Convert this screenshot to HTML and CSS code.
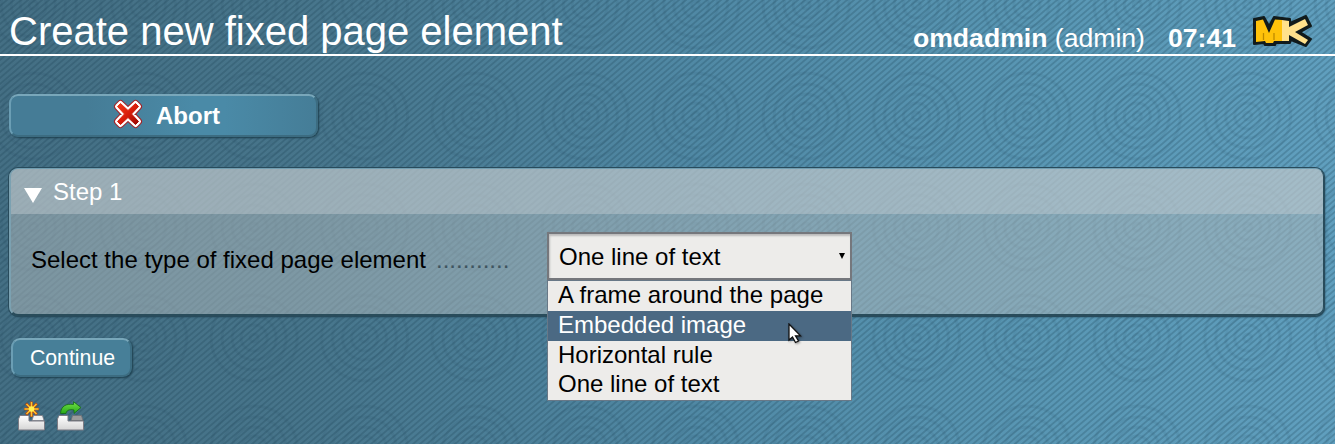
FILE: index.html
```html
<!DOCTYPE html>
<html lang="en">
<head>
<meta charset="utf-8">
<title>Create new fixed page element</title>
<link rel="stylesheet" href="styles.css">
</head>
<body>
<svg class="texture" width="1335" height="444" aria-hidden="true">
  <defs>
    <pattern id="rings" x="309.5" y="60" width="110.4" height="111" patternUnits="userSpaceOnUse">
      <g fill="none" stroke="#183f50" stroke-width="3" stroke-opacity=".085">
        <circle cx="55" cy="56" r="4"/><circle cx="55" cy="56" r="13"/><circle cx="55" cy="56" r="22"/><circle cx="55" cy="56" r="32"/><circle cx="55" cy="56" r="43"/>
      </g>
    </pattern>
    <pattern id="weave" width="7" height="6" patternUnits="userSpaceOnUse">
      <path d="M-3.500 3 3.500-3M-3.500 9 10.500-3M3.500 9 10.500 3" stroke="#12384a" stroke-opacity=".22" stroke-width="1.900"/>
    </pattern>
  </defs>
  <rect width="1335" height="444" fill="url(#weave)"/>
  <rect width="1335" height="444" fill="url(#rings)"/>
</svg>
<header class="header">
  <h1 class="title">Create new fixed page element</h1>
  <div class="session">
    <span class="user"><b>omdadmin</b> (admin)</span>
    <b class="clock">07:41</b>
    <svg class="logo" width="62" height="36" viewBox="0 0 62 36">
      <path d="M2 5 12 3 17 12 22 3 38 5 38 9 54 2 59 12 48 18 59 25 54 32 39 26 38 29 24 29 23 31 13 31 12 29 2 30Z" fill="#111b1c" stroke="#111b1c" stroke-width="2" stroke-linejoin="round"/>
      <path d="M4 7 11 5.500 17 19 23 5.500 30 6 30 27 22 27 21 29 14 29 13 27 4 28Z" fill="#ffc20a"/>
      <path d="M30 6 37 7 37 13 53 5 56 11 43 18 56 26 53 30 37 21 37 27 30 27Z" fill="#ffe18c"/>
      <path d="M11.500 19V26M22 19V26" stroke="#bd8a00" stroke-width="1.300"/>
    </svg>
  </div>
</header>
<main class="content">
  <button class="button abort">
    <svg width="30" height="30" viewBox="0 0 30 30">
      <defs><linearGradient id="red" x2="1" y2="1"><stop stop-color="#f33a18"/><stop offset=".5" stop-color="#d91d0b"/><stop offset="1" stop-color="#980500"/></linearGradient></defs>
      <g stroke-linejoin="round">
        <path d="M7.500 4.500 15 11.500 22.500 4.500 25.500 7.500 18.500 15 25.500 22.500 22.500 25.500 15 18.500 7.500 25.500 4.500 22.500 11.500 15 4.500 7.500Z" fill="none" stroke="#a32125" stroke-width="7"/>
        <path d="M7.500 4.500 15 11.500 22.500 4.500 25.500 7.500 18.500 15 25.500 22.500 22.500 25.500 15 18.500 7.500 25.500 4.500 22.500 11.500 15 4.500 7.500Z" fill="none" stroke="#fff" stroke-width="5"/>
        <path d="M7.500 4.500 15 11.500 22.500 4.500 25.500 7.500 18.500 15 25.500 22.500 22.500 25.500 15 18.500 7.500 25.500 4.500 22.500 11.500 15 4.500 7.500Z" fill="url(#red)" stroke="url(#red)" stroke-width="1"/>
      </g>
    </svg>
    <span>Abort</span>
  </button>
  <section class="panel">
    <h2 class="panel-title"><svg width="18" height="15" viewBox="0 0 18 15"><path d="M0 0H18L9 15Z" fill="#fff"/></svg>Step 1</h2>
    <div class="field">
      <span class="label">Select the type of fixed page element</span><span class="dots">...........</span>
      <div class="select">
        <span>One line of text</span>
        <svg width="6" height="6" viewBox="0 0 6 6"><path d="M0 0H6L3 6Z"/></svg>
        <ul class="menu">
          <li>A frame around the page</li>
          <li class="active">Embedded image</li>
          <li>Horizontal rule</li>
          <li>One line of text</li>
        </ul>
      </div>
    </div>
  </section>
  <button class="button continue">Continue</button>
  <div class="actions">
    <svg width="28" height="30" viewBox="0 0 28 30">
      <defs><linearGradient id="block" x2="0" y2="1"><stop stop-color="#fff"/><stop offset="1" stop-color="#d5d5d5"/></linearGradient></defs>
      <path d="M.5 18 2 14.500H11V20H26.500V29H.5Z" fill="url(#block)" stroke="#7b7b84"/>
      <path d="M14 19.500 15.500 14.500H24.500L26 19.500Z" fill="#f2f2f2" stroke="#7b7b84" stroke-width=".8"/>
      <path d="M13.500 .5V16M6 8H21M8 2.500 19 13.500M19 2.500 8 13.500" stroke="#b8450f" stroke-width="2.600"/>
      <path d="M13.500 1V15.500M6.500 8H20.500M8.500 3 18.500 13M18.500 3 8.500 13" stroke="#ffc62e" stroke-width="1.500"/>
      <circle cx="13.500" cy="8" r="2.800" fill="#fff251"/>
    </svg>
    <svg width="28" height="30" viewBox="0 0 28 30">
      <defs><linearGradient id="green" x2="0" y2="1"><stop stop-color="#75e34b"/><stop offset="1" stop-color="#26a916"/></linearGradient></defs>
      <path d="M.5 18 2 14.500H11V20H26.500V29H.5Z" fill="url(#block)" stroke="#7b7b84"/>
      <path d="M14 19.500 15.500 14.500H24.500L26 19.500Z" fill="#9b9b9b" stroke="#6f6f74" stroke-width=".8"/>
      <path d="M3.500 12.500C4 5 9 2.500 16.500 3.500V.7L24 6.500 17 12.500V9C12 8 9.500 9.500 9 12.500Z" fill="url(#green)" stroke="#136a14" stroke-width=".8"/>
    </svg>
  </div>
</main>
<svg class="cursor" width="14" height="22" viewBox="0 0 14 22"><path d="M1 1V17L4.500 14 7.500 19.500 10.500 18 7.500 12.800H12.500Z" fill="#fff" stroke="#111" stroke-width="1.300"/></svg>
</body>
</html>
```
FILE: styles.css
```css
* { box-sizing: border-box; }
body {
  margin: 0;
  height: 444px;
  overflow: hidden;
  position: relative;
  font-family: "Liberation Sans", Arial, sans-serif;
  font-size: 24px;
  background: linear-gradient(90deg, #446f84 0, #47758b 300px, #5089a5 700px, #5997b4 1050px, #609fbe 100%);
}
.texture { position: absolute; inset: 0; z-index: -1; }
.header {
  display: flex;
  justify-content: space-between;
  height: 56px;
  padding: 0 21px 0 9px;
  border-bottom: 2px solid #fff;
  color: #fff;
}
.title { margin: 0; padding-top: 8px; font-size: 40px; line-height: 46px; font-weight: 400; white-space: nowrap; }
.session { display: flex; font-size: 26.600px; line-height: 30px; }
.user { margin-top: 23px; }
.clock { margin: 23px 16px 0 23px; }
.logo { margin-top: 14px; }
.content { display: flex; flex-direction: column; align-items: flex-start; padding: 38px 9px 0; }
.button {
  display: flex;
  align-items: center;
  justify-content: center;
  padding: 0;
  border: 2px solid;
  border-color: #79a7ba #3c6c81 #3c6c81 #6b9eb4;
  border-radius: 9px;
  color: #fff;
  font-family: inherit;
  box-shadow: 1px 1px 2px #1c3e4d;
}
.abort {
  width: 309px;
  height: 43px;
  gap: 13px;
  padding-left: 6px;
  background: linear-gradient(90deg, #457c96 25%, #4a8aa7 60%, #4a8aa7 70%, #457d97);
  font-size: 24px;
  font-weight: 700;
}
.abort svg { margin-top: -4px; }
.panel {
  width: 1315px;
  height: 148px;
  margin-top: 31px;
  border: 2px solid;
  border-color: #719eb1 #294c5b #294c5b #7ba1b1;
  border-width: 1px 1px 2px 2px;
  border-radius: 9px;
  background: rgba(180, 187, 190, .5);
  box-shadow: 0 0 0 1px #284b5c, 1px 1px 2px #1c3e4d;
}
.panel-title {
  display: flex;
  align-items: center;
  gap: 11px;
  height: 45px;
  margin: 0;
  padding: 0 0 0 13px;
  border-radius: 7px 7px 0 0;
  background: rgba(202, 210, 214, .4);
  color: #fff;
  font-size: 24px;
  font-weight: 400;
}
.panel-title svg { margin-top: 8px; }
.field { display: flex; align-items: flex-start; padding: 18px 0 0 20px; }
.label, .dots { margin-top: 14px; line-height: 28px; white-space: nowrap; }
.label { width: 405px; }
.dots { width: 111px; color: #3f5560; }
.select {
  position: relative;
  display: flex;
  align-items: center;
  justify-content: space-between;
  width: 305px;
  height: 48px;
  padding: 1px 4px 0 9px;
  border: 3px solid #75777c;
  border-width: 2px 2px 2px;
  background: #edecea;
  box-shadow: inset 1px 2px 2px #bbb;
}
.select svg { margin-bottom: 2px; }
.menu {
  position: absolute;
  left: -2px;
  top: 46px;
  width: 305px;
  height: 121px;
  margin: 0;
  padding: 0;
  border: 1px solid #687887;
  background: #edecea;
  list-style: none;
}
.menu li { height: 30px; padding-left: 10px; line-height: 28px; }
.menu li:first-child { letter-spacing: .05px; }
.menu li:last-child { line-height: 26px; }
.menu .active { background: #4b6983; color: #fff; }
.select { padding: 2px 5px 0 10px; }
.continue {
  width: 121px;
  height: 39px;
  margin: 22px 0 0 2px;
  padding: 1px 0 0 2px;
  background: #477f98;
  font-size: 21.300px;
}
.actions { display: flex; gap: 11px; padding: 24px 0 0 9px; }
.cursor { position: absolute; left: 788px; top: 323px; filter: drop-shadow(1px 1px 1px rgba(0, 0, 0, .4)); }
```
